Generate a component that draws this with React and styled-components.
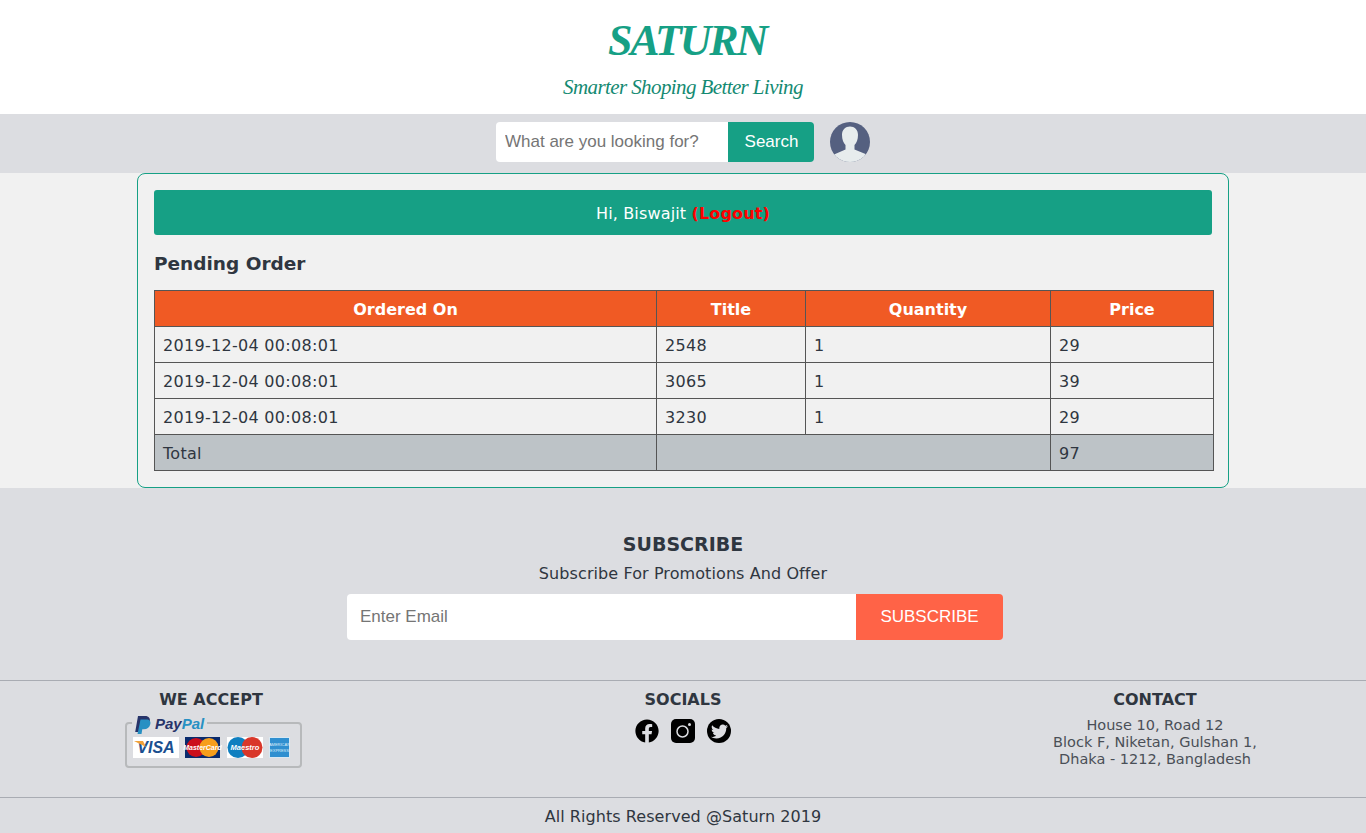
import React from 'react';
import styled, { createGlobalStyle } from 'styled-components';
import { FaFacebook, FaTwitter } from 'react-icons/fa';

const GlobalStyle = createGlobalStyle`
  html, body {
    margin: 0;
    padding: 0;
    background: #dcdde1;
    color: #2f3640;
    font-family: "DejaVu Sans", Verdana, sans-serif;
  }
  * { box-sizing: border-box; }
`;

const Header = styled.header`
  height: 114px;
  background: #fff;
  text-align: center;
`;

const Logo = styled.h1`
  margin: 0;
  padding: 16px 0 0 8px;
  height: 68px;
  font: italic 700 44px/50px "Liberation Serif", serif;
  letter-spacing: -2.2px;
  color: #16a085;
`;

const Tagline = styled.div`
  font: italic 400 21px/38px "Liberation Serif", serif;
  letter-spacing: -0.6px;
  color: #148a72;
`;

const SearchBar = styled.div`
  height: 59px;
  display: flex;
  justify-content: center;
  align-items: flex-start;
  padding: 8px 0 0 0;
  gap: 16px;
`;

const SearchForm = styled.form`
  display: flex;
  width: 318px;
  height: 40px;
  border-radius: 4px;
  overflow: hidden;
`;

const SearchInput = styled.input`
  width: 232px;
  border: 0;
  padding: 0 9px 1px;
  background: #fff;
  font: 17px "Liberation Sans", Arial, sans-serif;
  &::placeholder { color: #757575; opacity: 1; }
`;

const SearchButton = styled.button`
  flex: 1;
  border: 0;
  padding: 0 0 0 1px;
  background: #16a085;
  color: #fff;
  font: 17px "Liberation Sans", Arial, sans-serif;
`;

const Main = styled.main`
  background: #f1f1f1;
  height: 315px;
`;

const Card = styled.section`
  width: 1092px;
  height: 315px;
  margin: 0 auto;
  padding: 16px;
  border: 1px solid #16a085;
  border-radius: 8px;
`;

const Welcome = styled.div`
  height: 45px;
  width: 1058px;
  border-radius: 3px;
  background: #16a085;
  color: #fff;
  font-size: 16px;
  letter-spacing: 0.15px;
  line-height: 47px;
  text-align: center;
`;

const Logout = styled.span`
  color: #ff0000;
  font-weight: 700;
`;

const SectionTitle = styled.h3`
  margin: 17px 0 14px;
  font-size: 18.5px;
  line-height: 24px;
  font-weight: 700;
  color: #2f3640;
`;

const OrderTable = styled.table`
  width: 1059px;
  table-layout: fixed;
  border-collapse: collapse;
  font-size: 16px;
`;

const HeadCell = styled.th`
  height: 36px;
  padding: 2px 8px 0;
  border: 1px solid #555;
  background: #f05a24;
  color: #fff;
  font-weight: 700;
  text-align: center;
`;

const Cell = styled.td`
  height: 36px;
  padding: 2px 8px 0;
  border: 1px solid #555;
  color: #2f3640;
  letter-spacing: 0.3px;
  background: ${p => (p.$total ? '#bdc3c7' : 'transparent')};
`;

const Subscribe = styled.section`
  height: 192px;
  padding-top: 44px;
  text-align: center;
`;

const SubscribeTitle = styled.h3`
  margin: 0;
  font-size: 19px;
  line-height: 24px;
  font-weight: 700;
`;

const SubscribeText = styled.p`
  margin: 8px 0 10px;
  font-size: 16px;
  letter-spacing: 0.09px;
  line-height: 20px;
`;

const SubscribeForm = styled.form`
  display: flex;
  width: 656px;
  height: 46px;
  margin-left: 347px;
  border-radius: 4px;
  overflow: hidden;
`;

const EmailInput = styled.input`
  width: 509px;
  border: 0;
  padding: 0 13px;
  background: #fff;
  font: 17px "Liberation Sans", Arial, sans-serif;
  &::placeholder { color: #757575; opacity: 1; }
`;

const SubscribeButton = styled.button`
  flex: 1;
  border: 0;
  padding: 0;
  background: #ff6347;
  color: #fff;
  font: 17px "Liberation Sans", Arial, sans-serif;
`;

const Columns = styled.div`
  height: 117px;
  display: grid;
  grid-template-columns: repeat(3, 1fr);
  gap: 50px;
  border-top: 1px solid #a9acb3;
  padding-top: 9px;
  text-align: center;
`;

const Column = styled.div`
  display: flex;
  flex-direction: column;
  align-items: center;
`;

const ColumnTitle = styled.h4`
  margin: 0 0 ${p => p.$gap || 5}px;
  font-size: 16px;
  line-height: 20px;
  font-weight: 700;
`;

const BadgeWrap = styled.div`
  margin-left: 6px;
  svg { display: block; }
`;

const Socials = styled.div`
  display: flex;
  gap: 12px;
  color: #000;
`;

const SocialIcon = styled.span`
  width: 24px;
  height: 24px;
  display: block;
  svg { display: block; }
`;

const TwitterBadge = styled(SocialIcon)`
  display: flex;
  align-items: center;
  justify-content: center;
  border-radius: 50%;
  background: #000;
  color: #dcdde1;
`;

const Address = styled.address`
  font-style: normal;
  font-size: 14.5px;
  line-height: 17px;
  color: #4a4f57;
`;

const Copyright = styled.footer`
  height: 36px;
  border-top: 1px solid #a9acb3;
  font-size: 16px;
  letter-spacing: 0.06px;
  line-height: 38px;
  text-align: center;
`;

const rows = [
  ['2019-12-04 00:08:01', '2548', '1', '29'],
  ['2019-12-04 00:08:01', '3065', '1', '39'],
  ['2019-12-04 00:08:01', '3230', '1', '29'],
];

const Avatar = () => (
  <svg width="40" height="40" viewBox="0 0 40 40">
    <defs>
      <clipPath id="avatar-clip"><circle cx="20" cy="20" r="20" /></clipPath>
    </defs>
    <circle cx="20" cy="20" r="20" fill="#556080" />
    <g clipPath="url(#avatar-clip)" fill="#e7eced">
      <path d="M12 13c0-5.500 3.500-8.500 8-8.500s8 3 8 8.500c0 4.500-1.500 8-3.500 10v4.500l11 4.500V42H4V32.500l11.500-5V23C13.500 21 12 17.500 12 13z" />
    </g>
  </svg>
);

const InstagramIcon = () => (
  <svg width="24" height="24" viewBox="0 0 24 24">
    <rect width="24" height="24" rx="5" fill="#000" />
    <circle cx="11.500" cy="12.500" r="5.500" fill="none" stroke="#dcdde1" strokeWidth="1.500" />
    <circle cx="18.500" cy="5.500" r="1.500" fill="#dcdde1" />
  </svg>
);

const PaymentBadge = () => (
  <svg width="178" height="54" viewBox="0 0 178 54">
    <path d="M7 8H4a3 3 0 0 0-3 3v38a3 3 0 0 0 3 3h169a3 3 0 0 0 3-3V11a3 3 0 0 0-3-3H82" fill="none" stroke="#b7b9bb" strokeWidth="2" />
    <path d="M13 1h7c4 0 5.500 2.500 4.800 5.500C24 10 21.500 11.500 18 11.500h-1.800L15 17h-4.800z" fill="#27346a" />
    <path d="M15.500 4.500h6c3 0 4.500 2 3.800 4.800-.8 3.400-3.200 5-6.500 5h-1.500L16.500 19h-4z" fill="#2790c3" />
    <text x="30" y="14" fontFamily="Liberation Sans" fontSize="15" fontWeight="700" fontStyle="italic" fill="#27346a">Pay<tspan fill="#2790c3">Pal</tspan></text>
    <rect x="8" y="22" width="46" height="21" fill="#fff" />
    <text x="31" y="38" textAnchor="middle" fontFamily="Liberation Sans" fontSize="16" fontWeight="700" fontStyle="italic" fill="#1a4f8f">VISA</text>
    <path d="M9 26h9l3 6z" fill="#f0a13a" />
    <rect x="60" y="22" width="35" height="21" fill="#0a2a6c" />
    <circle cx="71" cy="32.500" r="9.500" fill="#cc0f1c" />
    <circle cx="84" cy="32.500" r="9.500" fill="#f79e1b" />
    <text x="77.500" y="35" textAnchor="middle" fontFamily="Liberation Sans" fontSize="7" fontWeight="700" fontStyle="italic" fill="#fff">MasterCard</text>
    <rect x="102" y="22" width="36" height="21" fill="#fff" />
    <circle cx="113" cy="32.500" r="10.500" fill="#0f7fc0" />
    <circle cx="127" cy="32.500" r="10.500" fill="#d9372a" />
    <text x="120" y="35" textAnchor="middle" fontFamily="Liberation Sans" fontSize="7.500" fontWeight="700" fontStyle="italic" fill="#fff">Maestro</text>
    <rect x="144" y="22" width="21" height="21" fill="#d7e8f3" />
    <rect x="145" y="23" width="19" height="19" fill="#2f8fd0" />
    <text x="154.500" y="31" textAnchor="middle" fontFamily="Liberation Sans" fontSize="4" fill="#dff0fb">AMERICAN</text>
    <text x="154.500" y="37" textAnchor="middle" fontFamily="Liberation Sans" fontSize="4" fill="#dff0fb">EXPRESS</text>
  </svg>
);

const App = () => (
  <>
    <GlobalStyle />
    <Header>
      <Logo>SATURN</Logo>
      <Tagline>Smarter Shoping Better Living</Tagline>
    </Header>
    <SearchBar>
      <SearchForm>
        <SearchInput placeholder="What are you looking for?" />
        <SearchButton type="button">Search</SearchButton>
      </SearchForm>
      <Avatar />
    </SearchBar>
    <Main>
      <Card>
        <Welcome>Hi, Biswajit <Logout>(Logout)</Logout></Welcome>
        <SectionTitle>Pending Order</SectionTitle>
        <OrderTable>
          <colgroup>
            <col style={{ width: 502 }} />
            <col style={{ width: 149 }} />
            <col style={{ width: 245 }} />
            <col style={{ width: 163 }} />
          </colgroup>
          <thead>
            <tr>
              <HeadCell>Ordered On</HeadCell>
              <HeadCell>Title</HeadCell>
              <HeadCell>Quantity</HeadCell>
              <HeadCell>Price</HeadCell>
            </tr>
          </thead>
          <tbody>
            {rows.map(row => (
              <tr key={row[1]}>
                {row.map((value, i) => <Cell key={i}>{value}</Cell>)}
              </tr>
            ))}
            <tr>
              <Cell $total>Total</Cell>
              <Cell $total colSpan={2} />
              <Cell $total>97</Cell>
            </tr>
          </tbody>
        </OrderTable>
      </Card>
    </Main>
    <Subscribe>
      <SubscribeTitle>SUBSCRIBE</SubscribeTitle>
      <SubscribeText>Subscribe For Promotions And Offer</SubscribeText>
      <SubscribeForm>
        <EmailInput placeholder="Enter Email" />
        <SubscribeButton type="button">SUBSCRIBE</SubscribeButton>
      </SubscribeForm>
    </Subscribe>
    <Columns>
      <Column>
        <ColumnTitle>WE ACCEPT</ColumnTitle>
        <BadgeWrap><PaymentBadge /></BadgeWrap>
      </Column>
      <Column>
        <ColumnTitle $gap={9}>SOCIALS</ColumnTitle>
        <Socials>
          <SocialIcon><FaFacebook size={24} /></SocialIcon>
          <SocialIcon><InstagramIcon /></SocialIcon>
          <TwitterBadge><FaTwitter size={17} /></TwitterBadge>
        </Socials>
      </Column>
      <Column>
        <ColumnTitle $gap={7}>CONTACT</ColumnTitle>
        <Address>
          House 10, Road 12<br />
          Block F, Niketan, Gulshan 1,<br />
          Dhaka - 1212, Bangladesh
        </Address>
      </Column>
    </Columns>
    <Copyright>All Rights Reserved @Saturn 2019</Copyright>
  </>
);

export default App;
